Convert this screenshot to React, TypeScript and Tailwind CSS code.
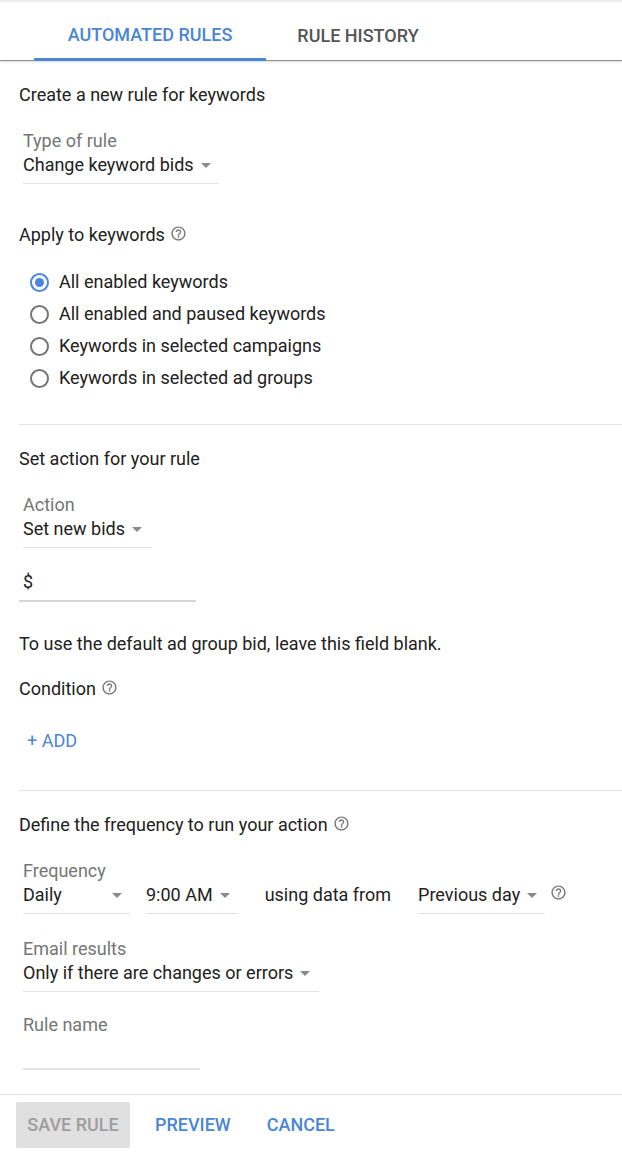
import React from "react";

const Help = ({ className = "" }: { className?: string }) => (
  <svg viewBox="0 0 24 24" className={`w-[17px] h-[17px] fill-[#777] ${className}`}>
    <path d="M11 18h2v-2h-2v2zm1-16C6.48 2 2 6.48 2 12s4.48 10 10 10 10-4.48 10-10S17.52 2 12 2zm0 18c-4.41 0-8-3.59-8-8s3.59-8 8-8 8 3.59 8 8-3.59 8-8 8zm0-14c-2.21 0-4 1.790-4 4h2c0-1.1.9-2 2-2s2 .9 2 2c0 2-3 1.75-3 5h2c0-2.25 3-2.5 3-5 0-2.21-1.79-4-4-4z" />
  </svg>
);

const Arrow = () => (
  <svg viewBox="0 0 10 5" className="w-[10px] h-[5px] fill-[#8a8a8a] shrink-0">
    <path d="M0 0l5 5 5-5z" />
  </svg>
);

const Select = ({ value, className = "" }: { value: string; className?: string }) => (
  <div className={`inline-flex items-center h-[24px] box-content pb-[6px] border-b border-[#e2e2e2] ${className}`}>
    <span className="text-[#212121] leading-[24px]">{value}</span>
    <Arrow />
  </div>
);

const Radio = ({ checked, label }: { checked?: boolean; label: string }) => (
  <div className="flex items-center h-[32px]">
    <div
      className={`w-[19px] h-[19px] rounded-full border-2 flex items-center justify-center ${
        checked ? "border-[#4a86e0]" : "border-[#757575]"
      }`}
    >
      {checked && <div className="w-[9px] h-[9px] rounded-full bg-[#4a86e0]" />}
    </div>
    <span className="ml-[10px] text-[#212121]">{label}</span>
  </div>
);

export default function App() {
  return (
    <div
      className="w-[622px] h-[1154px] bg-white text-[18px] leading-[24px] overflow-hidden"
      style={{ fontFamily: "Roboto, 'Liberation Sans', sans-serif" }}
    >
      {/* Tabs */}
      <div className="relative h-[61px] flex border-b border-[#8f8f8f] shadow-[0_1px_2px_rgba(0,0,0,0.15)]">
        <div className="absolute inset-x-0 top-0 h-[3px] bg-gradient-to-b from-[#e6e6e6] to-white" />
        <div className="ml-[34px] w-[232px] flex items-center justify-center pt-[12px] font-medium text-[#4a86d4] border-b-[3px] border-[#4a86d4] mb-[-1px]">
          AUTOMATED RULES
        </div>
        <div className="w-[184px] flex items-center justify-center pt-[12px] font-medium text-[#555]">
          RULE HISTORY
        </div>
      </div>

      <div className="pl-[19px]">
        <div className="mt-[22px] text-[#212121]">Create a new rule for keywords</div>

        <div className="mt-[22px] ml-[4px] flex flex-col items-start">
          <div className="text-[#757575]">Type of rule</div>
          <Select value="Change keyword bids" className="gap-[7px] pr-[8px]" />
        </div>

        <div className="mt-[39px] flex items-center gap-[5px] text-[#212121]">
          Apply to keywords <Help className="-mt-[4px]" />
        </div>

        <div className="mt-[19px] ml-[11px]">
          <Radio checked label="All enabled keywords" />
          <Radio label="All enabled and paused keywords" />
          <Radio label="Keywords in selected campaigns" />
          <Radio label="Keywords in selected ad groups" />
        </div>

        <div className="mt-[30px] border-t border-[#e3e3e3]" />

        <div className="mt-[22px] text-[#212121]">Set action for your rule</div>

        <div className="mt-[22px] ml-[4px] flex flex-col items-start">
          <div className="text-[#757575]">Action</div>
          <Select value="Set new bids" className="gap-[7px] pr-[10px]" />
        </div>

        <div className="mt-[22px] w-[177px] pl-[4px] pb-[6px] border-b-2 border-[#d6d6d6] text-[#212121]">$</div>

        <div className="mt-[30px] text-[#212121]">To use the default ad group bid, leave this field blank.</div>

        <div className="mt-[21px] flex items-center gap-[5px] text-[#212121]">
          Condition <Help className="-mt-[4px]" />
        </div>

        <div className="mt-[28px] ml-[8px] text-[#4a86d4]">+ ADD</div>

        <div className="mt-[37px] border-t border-[#e3e3e3]" />

        <div className="mt-[22px] flex items-center gap-[5px] text-[#212121]">
          Define the frequency to run your action <Help className="-mt-[4px]" />
        </div>

        <div className="mt-[22px] ml-[4px] text-[#757575]">Frequency</div>
        <div className="ml-[4px] flex items-start">
          <Select value="Daily" className="w-[99px] justify-between pr-[8px]" />
          <Select value="9:00 AM" className="ml-[16px] gap-[7px] pr-[8px]" />
          <span className="ml-[27px] text-[#212121]">using data from</span>
          <Select value="Previous day" className="ml-[27px] gap-[7px] pr-[8px]" />
          <Help className="ml-[5px] mt-[1px]" />
        </div>

        <div className="mt-[23px] ml-[4px] flex flex-col items-start">
          <div className="text-[#757575]">Email results</div>
          <Select value="Only if there are changes or errors" className="gap-[7px] pr-[9px]" />
        </div>

        <div className="mt-[21px] ml-[4px] text-[#757575]">Rule name</div>
        <div className="ml-[4px] w-[177px] h-[31px] box-content border-b-2 border-[#e2e2e2]" />
      </div>

      <div className="mt-[24px] border-t border-[#e0e0e0] pt-[7px] pl-[16px] flex items-center font-medium">
        <div className="w-[114px] h-[46px] rounded-[2px] bg-[#e0e0e0] text-[#9e9e9e] flex items-center justify-center">
          SAVE RULE
        </div>
        <div className="ml-[25px] text-[#4a86d4]">PREVIEW</div>
        <div className="ml-[36px] text-[#4a86d4]">CANCEL</div>
      </div>
    </div>
  );
}
